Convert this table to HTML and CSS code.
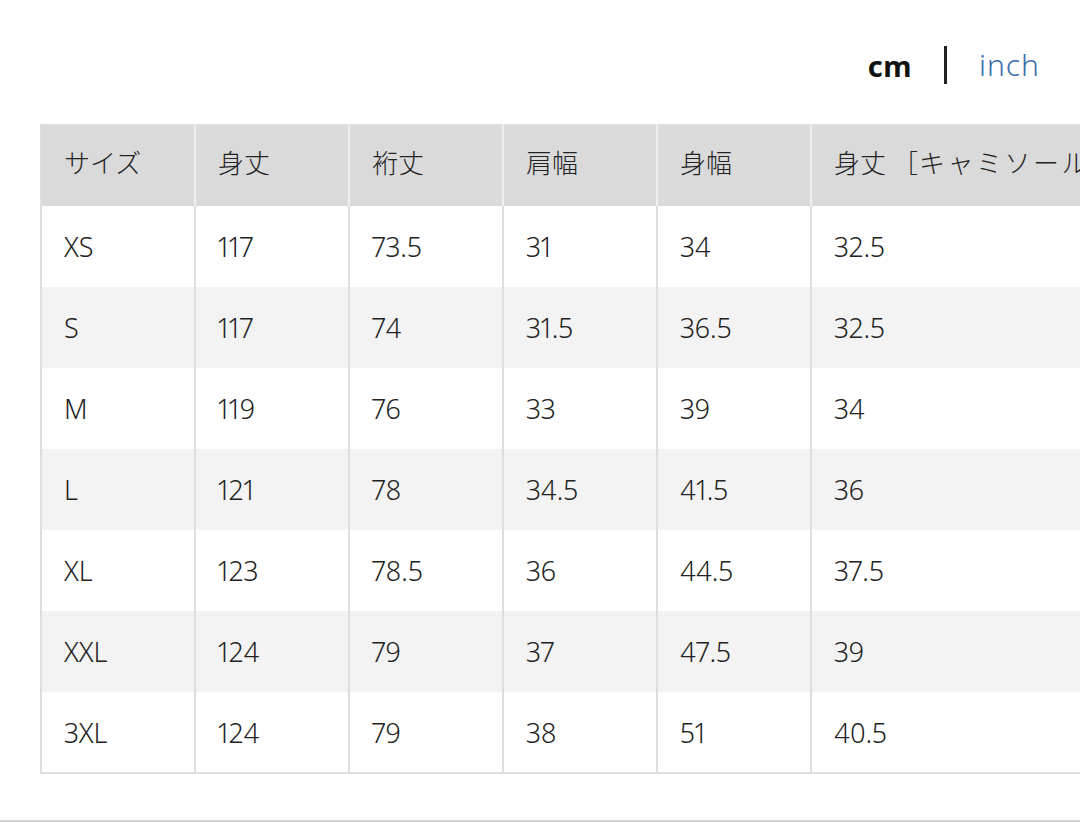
FILE: index.html
```html
<!DOCTYPE html>
<html lang="ja">
<head>
<meta charset="utf-8">
<link rel="stylesheet" href="styles.css">
</head>
<body>
<div class="page">
  <div class="units">
    <span class="unit unit-active">cm</span>
    <span class="unit-sep"></span>
    <span class="unit unit-link">inch</span>
  </div>
  <div class="table-wrap">
    <table class="size-table">
      <colgroup>
        <col class="c"><col class="c"><col class="c"><col class="c"><col class="c"><col class="c-wide">
      </colgroup>
      <thead>
        <tr>
          <th>サイズ</th><th>身丈</th><th>裄丈</th><th>肩幅</th><th>身幅</th><th>身丈<span class="bracket">［</span><span class="kana">キャミソール］</span></th>
        </tr>
      </thead>
      <tbody>
        <tr><td>XS</td><td>117</td><td>73.5</td><td>31</td><td>34</td><td>32.5</td></tr>
        <tr><td>S</td><td>117</td><td>74</td><td>31.5</td><td>36.5</td><td>32.5</td></tr>
        <tr><td>M</td><td>119</td><td>76</td><td>33</td><td>39</td><td>34</td></tr>
        <tr><td>L</td><td>121</td><td>78</td><td>34.5</td><td>41.5</td><td>36</td></tr>
        <tr><td>XL</td><td>123</td><td>78.5</td><td>36</td><td>44.5</td><td>37.5</td></tr>
        <tr><td>XXL</td><td>124</td><td>79</td><td>37</td><td>47.5</td><td>39</td></tr>
        <tr><td>3XL</td><td>124</td><td>79</td><td>38</td><td>51</td><td>40.5</td></tr>
      </tbody>
    </table>
  </div>
  <div class="bottom-rule"></div>
</div>
</body>
</html>
```

FILE: styles.css
```css
* { box-sizing: border-box; }
html, body {
  margin: 0;
  padding: 0;
  background: #fff;
  overflow: hidden;
}
body {
  width: 1080px;
  height: 822px;
  font-family: "Noto Sans", "Noto Sans CJK JP", sans-serif;
  color: #222;
}
.page {
  width: 1080px;
  height: 822px;
  display: flex;
  flex-direction: column;
}
.units {
  height: 124px;
  display: flex;
  align-items: center;
  justify-content: flex-end;
  padding-right: 40px;
  padding-top: 6px;
}
.unit {
  font-size: 29px;
  line-height: 1;
}
.unit-active {
  font-weight: 700;
  color: #111;
  letter-spacing: 0.5px;
}
.unit-sep {
  width: 3px;
  height: 38px;
  background: #222;
  margin: 0 32px 0 32px;
}
.unit-link {
  color: #3a6ea8;
  font-weight: 300;
  font-size: 30px;
  letter-spacing: 1px;
}
.table-wrap {
  padding-left: 40px;
  height: 652px;
}
.size-table {
  border-collapse: collapse;
  table-layout: fixed;
  width: 1172px;
  border: 2px solid #dedede;
  border-right: none;
  font-variant-numeric: proportional-nums;
}
.size-table col.c { width: 154px; }
.size-table col.c-wide { width: 402px; }
.size-table th,
.size-table td {
  height: 81px;
  padding: 0 0 0 22px;
  text-align: left;
  white-space: nowrap;
  font-size: 27px;
  font-weight: 300;
}
.size-table th {
  background: #dadada;
  font-family: "Noto Sans CJK JP", sans-serif;
  font-weight: 300;
  font-size: 26px;
  vertical-align: middle;
  padding-bottom: 9px;
  border-left: 2px solid #efefef;
}
.size-table th .bracket {
  margin-left: 6px;
  margin-right: 1px;
}
.size-table th .kana {
  letter-spacing: 2.5px;
}
.size-table th:first-child { border-left: none; }
.size-table td {
  border-left: 2px solid #dedede;
  vertical-align: middle;
}
.size-table td:first-child { border-left: none; }
.size-table tbody tr:nth-child(even) td { background: #f3f3f3; }
.bottom-rule {
  margin-top: auto;
  height: 2px;
  background: #d4d4d4;
}
```
